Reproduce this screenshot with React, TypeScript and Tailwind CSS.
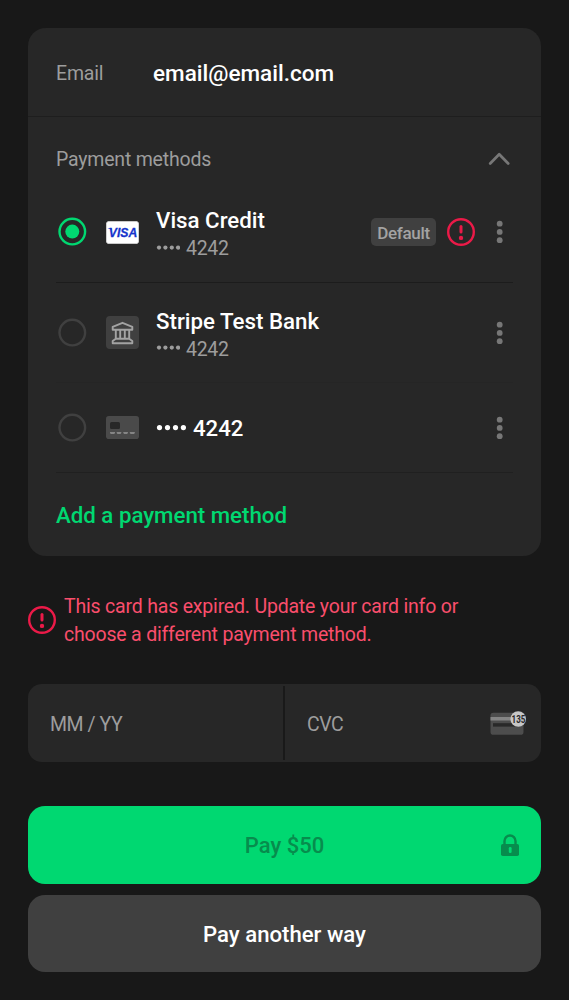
import React from "react";

function AlertIcon() {
  return (
    <svg className="size-7 shrink-0" viewBox="0 0 28 28" fill="none">
      <circle cx="14" cy="14" r="12.8" stroke="#eb1a48" strokeWidth="2.4" />
      <path d="M14 8.6v5.4" stroke="#eb1a48" strokeWidth="3" strokeLinecap="round" />
      <circle cx="14" cy="19.9" r="2.2" fill="#eb1a48" />
    </svg>
  );
}

function Radio({ checked = false }: { checked?: boolean }) {
  return (
    <svg className="size-7 shrink-0 overflow-visible" viewBox="0 0 28 28" fill="none">
      <circle cx="14.3" cy="13.6" r="12.8" stroke={checked ? "#00d871" : "#404040"} strokeWidth="2.4" />
      {checked && <circle cx="14.3" cy="13.6" r="7" fill="#00d871" />}
    </svg>
  );
}

function MoreIcon() {
  return (
    <svg className="mr-px h-6 w-6 shrink-0" viewBox="0 0 24 24" fill="#777777">
      <circle cx="11.7" cy="3.7" r="2.9" />
      <circle cx="11.7" cy="11.9" r="2.9" />
      <circle cx="11.7" cy="20.2" r="2.9" />
    </svg>
  );
}

function VisaMark() {
  return (
    <svg className="h-[23px] w-[33px]" viewBox="0 0 33 23">
      <rect x="0.4" y="0.4" width="32.2" height="22.2" rx="2.6" fill="#fff" stroke="#dedede" strokeWidth="0.8" />
      <text x="2.8" y="16.4" fontFamily="Liberation Sans" fontSize="13.4" fontWeight="700" fontStyle="italic" fill="#1434cb" stroke="#1434cb" strokeWidth="0.3" textLength="28.4" lengthAdjust="spacingAndGlyphs">VISA</text>
      <path d="M1.8 6.9h3.4l.9 2.4C4.8 8.1 3.5 7.6 1.8 7.3z" fill="#1434cb" />
    </svg>
  );
}

function BankMark() {
  return (
    <svg className="size-[33px]" viewBox="0 0 33 33" fill="none">
      <rect width="33" height="33" rx="4" fill="#404040" />
      <g stroke="#a3a3a3" strokeWidth="1.9" strokeLinejoin="round">
        <path d="M16.5 6.8 26.3 10.8V13.8H6.7V10.8Z" />
        <path d="M9.8 14v8.3M14.2 14v8.3M18.8 14v8.3M23.2 14v8.3" />
        <path d="M9.8 22.7h13.4L26.3 25v2.2H6.7V25Z" />
      </g>
    </svg>
  );
}

function CardMark() {
  return (
    <svg className="h-[23px] w-[33px]" viewBox="0 0 33 23">
      <rect width="33" height="23" rx="2.8" fill="#4a4a4a" />
      <rect x="4" y="6" width="10" height="7" rx="1.5" fill="#272727" />
      <path d="M4 16h5v1l-.8 1H4.8L4 17zm6.7 0h4.6v1l-.8 1h-3l-.8-1zm6.6 0h4.6v1l-.8 1h-3l-.8-1zm6.5 0h5v1l-.8 1h-3.4l-.8-1z" fill="#858585" />
    </svg>
  );
}

function Dots({ large = false }: { large?: boolean }) {
  return large ? (
    <svg className="h-5 w-[30px]" viewBox="0 0 30 20" fill="#fff">
      <circle cx="3.5" cy="9.6" r="2.6" /><circle cx="11.5" cy="9.6" r="2.6" /><circle cx="19.5" cy="9.6" r="2.6" /><circle cx="27.4" cy="9.6" r="2.6" />
    </svg>
  ) : (
    <svg className="h-5 w-[24px]" viewBox="0 0 24 20" fill="#9d9d9d">
      <circle cx="3" cy="9.6" r="2.1" /><circle cx="9.4" cy="9.6" r="2.1" /><circle cx="15.8" cy="9.6" r="2.1" /><circle cx="22" cy="9.6" r="2.1" />
    </svg>
  );
}

type MethodProps = {
  mark: React.ReactNode;
  title?: string;
  checked?: boolean;
  children?: React.ReactNode;
};

function Method({ mark, title, checked, children }: MethodProps) {
  return (
    <div className="flex h-full items-center pl-[2px]">
      <Radio checked={checked} />
      <div className="ml-5 flex w-[33px] shrink-0 justify-center">{mark}</div>
      <div className="ml-[17px] flex flex-1 flex-col">
        {title ? (
          <div className="flex flex-col pt-[3px]">
            <span className="text-[22.3px] leading-7 font-medium text-white">{title}</span>
            <span className="flex h-[27px] items-center gap-[6px] text-[19.5px] leading-[25px] tracking-[-0.3px] text-[#9d9d9d]">
              <Dots />
              <span className="pt-[2px]">4242</span>
            </span>
          </div>
        ) : (
          <span className="flex items-center gap-[7px] text-[22.2px] leading-7 font-medium text-white"><Dots large />4242</span>
        )}
      </div>
      {children}
      <MoreIcon />
    </div>
  );
}

export default function App() {
  return (
    <main className="h-[1000px] w-[569px] bg-[#181818] px-7 pt-7 font-['Roboto',sans-serif]">
      <section className="h-[528px] rounded-[18px] bg-[#272727]">
        <div className="flex h-[89px] items-center border-b border-[#1e1e1e] px-7 pt-px">
          <span className="w-[97px] pt-[3px] text-[19.5px] leading-7 tracking-[-0.2px] text-[#9d9d9d]">Email</span>
          <span className="text-[22.5px] leading-8 font-medium text-white">email@email.com</span>
        </div>
        <div className="px-7">
          <div className="flex h-[65px] items-center justify-between pt-[19px] text-[19.5px] leading-7 tracking-[-0.2px] text-[#9d9d9d]">
            <span className="pt-[2px]">Payment methods</span>
            <svg className="mr-[2px] h-6 w-6" viewBox="0 0 24 24" fill="none" stroke="#777777" strokeWidth="2.7" strokeLinecap="round" strokeLinejoin="round"><path d="m3.2 16.5 9-9.3 9 9.3" /></svg>
          </div>
          <div className="h-[101px] border-b border-[#1c1c1c]">
            <Method mark={<VisaMark />} title="Visa Credit" checked>
              <span className="mr-[11px] flex h-7 w-[65px] items-center justify-center rounded-[5px] bg-[#404040] pt-[3px] text-[17px] font-medium tracking-[-0.3px] text-[#a3a3a3]">Default</span>
              <div className="mr-[13px]"><AlertIcon /></div>
            </Method>
          </div>
          <div className="h-[100px] border-b border-[#252525]">
            <Method mark={<BankMark />} title="Stripe Test Bank" />
          </div>
          <div className="h-[90px] border-b border-[#202020]">
            <Method mark={<CardMark />} />
          </div>
          <button className="flex h-[83px] items-center text-[22.25px] leading-8 font-medium text-[#00d871]">Add a payment method</button>
        </div>
      </section>
      <div className="mt-9 flex h-14 items-center gap-[9px]">
        <AlertIcon />
        <p className="-ml-px pt-[2px] text-[19.5px] leading-7 tracking-[-0.19px] whitespace-nowrap text-[#fa4e6c]">This card has expired. Update your card info or<br />choose a different payment method.</p>
      </div>
      <div className="mt-9 flex h-[78px] items-center rounded-[14px] bg-[#272727] text-[19.5px] leading-7 tracking-[-0.45px] text-[#9d9d9d]">
        <span className="w-[255px] pt-[4px] pl-[22px]">MM / YY</span>
        <span className="h-[74px] w-[2px] bg-[#191919]" />
        <span className="flex-1 pt-[4px] pl-[22px]">CVC</span>
        <svg className="mr-[14px] h-6 w-[37px] overflow-visible" viewBox="0 0 37 24">
          <rect x="0.5" y="1.7" width="33" height="22" rx="2.8" fill="#4d4d4d" />
          <path d="M.5 6h33v3.6H.5z" fill="#858585" />
          <path d="M3 12.2h25v3.4H3z" fill="#292929" />
          <circle cx="28.2" cy="8" r="7.8" fill="#c7c7c7" />
          <text className="tracking-normal" x="21.6" y="11.7" fontFamily="Roboto" fontSize="10.6" fontWeight="700" fill="#272727" textLength="13.8" lengthAdjust="spacingAndGlyphs">135</text>
        </svg>
      </div>
      <button className="mt-11 flex h-[78px] w-full items-center justify-center rounded-[17px] bg-[#00d871] text-[22px] leading-8 font-medium text-[#078c4d]">
        <span className="w-[21px]" />
        <span className="flex-1 pt-[2px] pl-[20px] text-center">Pay $50</span>
        <svg className="mr-[21px] h-6 w-5" viewBox="0 0 20 24">
          <path d="M4.5 11V8a5.5 5.5 0 0 1 11 0v3" fill="none" stroke="#078c4d" strokeWidth="2.4" />
          <rect x="1" y="11" width="18" height="12" rx="1.8" fill="#078c4d" />
          <rect x="8.8" y="14" width="2.8" height="6" rx="1.2" fill="#00d871" />
        </svg>
      </button>
      <button className="mt-[11px] flex h-[77px] w-full items-center justify-center rounded-[17px] bg-[#404040] text-[22.15px] leading-8 font-medium text-white">Pay another way</button>
    </main>
  );
}
